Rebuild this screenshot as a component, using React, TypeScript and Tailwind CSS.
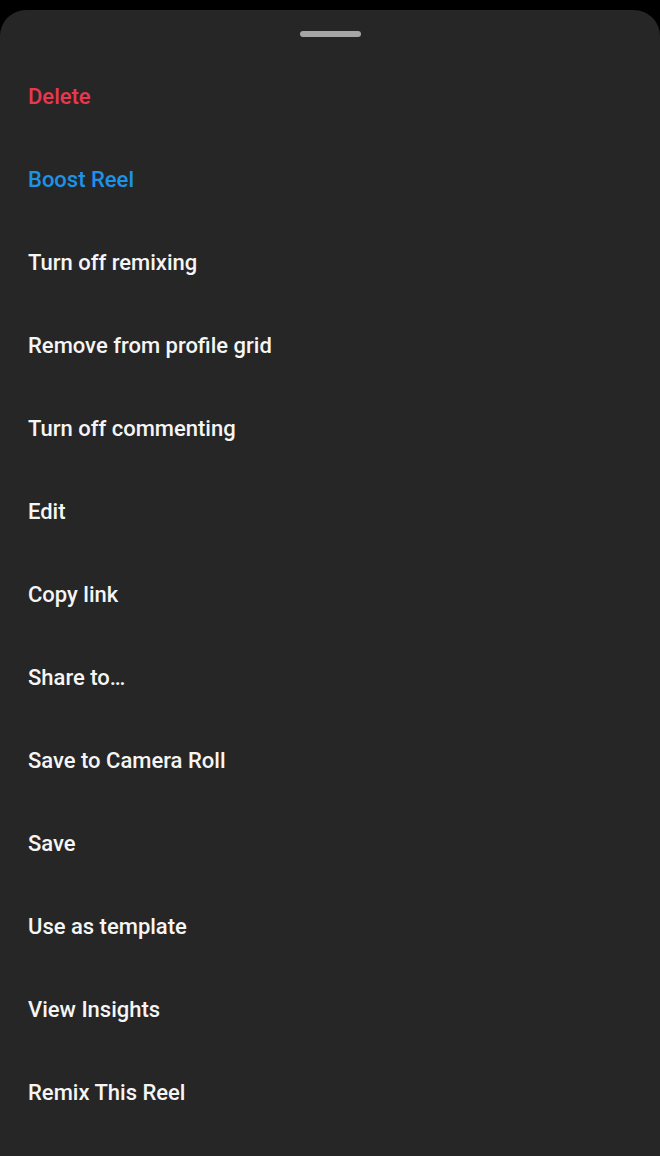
import React from 'react';

const items = [
  { label: 'Delete', color: 'text-[#e8384f]' },
  { label: 'Boost Reel', color: 'text-[#1d93e6]' },
  { label: 'Turn off remixing' },
  { label: 'Remove from profile grid' },
  { label: 'Turn off commenting' },
  { label: 'Edit' },
  { label: 'Copy link' },
  { label: 'Share to…' },
  { label: 'Save to Camera Roll' },
  { label: 'Save' },
  { label: 'Use as template' },
  { label: 'View Insights' },
  { label: 'Remix This Reel' },
];

export default function App() {
  return (
    <div className="w-[660px] h-[1156px] bg-black overflow-hidden" style={{ fontFamily: 'Roboto, "Noto Sans", sans-serif' }}>
      <div className="mt-[10px] h-[1146px] bg-[#262626] rounded-t-[26px] pt-[21px]">
        <div className="mx-auto w-[61px] h-[6px] rounded-full bg-[#a6a6a6]" />
        <ul className="mt-[18px]">
          {items.map((item) => (
            <li
              key={item.label}
              className={`h-[83px] flex items-center px-[28px] text-[22px] font-medium ${item.color ?? 'text-[#f5f5f5]'}`}
            >
              {item.label}
            </li>
          ))}
        </ul>
      </div>
    </div>
  );
}
